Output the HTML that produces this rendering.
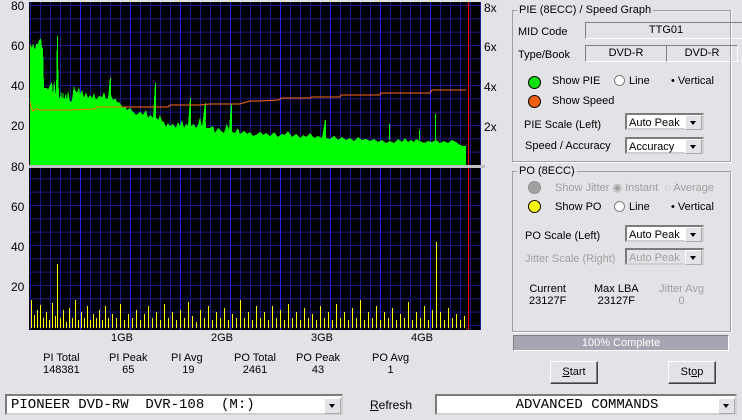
<!DOCTYPE html><html><head><style>
body{margin:0;width:742px;height:420px;background:#e3e2e6;font-family:"Liberation Sans",sans-serif;font-size:11px;color:#000;position:relative;overflow:hidden}
.a{position:absolute;white-space:nowrap}
.ax{font-size:12px}
.gb{position:absolute;border:1px solid #a0a0a0;box-shadow:1px 1px 0 #fff}
.gbt{position:absolute;top:-7px;left:4px;background:#e3e2e6;padding:0 2px}
.fld{position:absolute;border:1px solid;border-color:#808080 #fff #fff #808080;text-align:center;line-height:14px}
.cb{position:absolute;background:#fff;border:2px inset #d0d0d0;height:17px;line-height:17px;padding-left:2px;box-sizing:border-box}
.cb i{position:absolute;right:0;top:0;width:15px;height:13px;background:#e3e2e6;border:1px outset #fff}
.cb i:after{content:"";position:absolute;left:4px;top:5px;border:3.5px solid transparent;border-top:4px solid #000}
.dis{color:#a0a0a0}
.btn{position:absolute;border:1px solid;border-color:#fff #404040 #404040 #fff;box-shadow:inset -1px -1px 0 #808080;text-align:center;background:#e3e2e6}
.led{position:absolute;width:11px;height:11px;border-radius:50%;border:1px solid #000}
.rad{position:absolute;width:9px;height:9px;border-radius:50%;background:#fff;border:1px solid #808080}
</style></head><body>
<svg class="a" style="left:29px;top:2px" width="456" height="330" viewBox="29 2 456 330" shape-rendering="crispEdges">
<defs><pattern id="g" x="30" y="5" width="10" height="13.33" patternUnits="userSpaceOnUse"><path d="M0.5 0V13.33M0 0.5H10" stroke="#1a1a8c" stroke-width="1" fill="none"/></pattern></defs>
<rect x="29" y="2" width="452" height="163" fill="#000"/>
<rect x="29" y="168" width="452" height="162" fill="#000"/>
<rect x="29" y="2" width="452" height="163" fill="url(#g)"/>
<rect x="29" y="168" width="452" height="162" fill="url(#g)"/>
<g stroke="#2020ff" stroke-width="1"><path d="M80.5 2V165M130.5 2V165M180.5 2V165M230.5 2V165M280.5 2V165M330.5 2V165M380.5 2V165M430.5 2V165M80.5 168V330M130.5 168V330M180.5 168V330M230.5 168V330M280.5 168V330M330.5 168V330M380.5 168V330M430.5 168V330"/></g>
<polygon fill="#00ff00" points="30,165 30,44 32,48 33,43 35,50 36,44 38,44 39,40 41,38 42,48 43,47 44,88 47,88 48,90 50,85 52,82 53,95 54,80 56,95 57,36 58,60 59,98 60,98 61,90 62,100 63,91 64,100 66,93 67,100 68,90 70,102 72,100 74,85 75,90 77,93 79,87 80,94 82,90 84,98 86,92 88,98 90,95 92,98 94,93 96,100 98,97 100,96 102,98 104,92 106,99 108,98 110,78 111,95 113,100 115,98 117,102 120,103 123,108 125,106 127,110 130,108 133,112 136,115 140,112 143,115 146,110 148,118 150,115 153,118 155,83 156,118 158,120 160,115 162,121 164,122 166,127 168,123 170,126 173,124 176,128 178,122 180,126 182,120 184,128 186,124 188,126 190,98 191,126 194,124 196,128 198,125 200,117 202,127 205,103 206,128 210,128 213,126 215,133 218,128 220,130 224,133 227,124 229,130 231,104 232,132 235,133 238,128 240,134 244,131 247,134 250,132 253,136 256,135 260,132 263,135 266,133 270,136 274,132 278,137 282,134 285,135 288,131 292,137 296,134 300,138 303,135 306,137 310,133 314,138 318,136 322,138 325,120 326,138 330,139 334,136 338,140 342,137 346,140 350,138 354,141 358,137 362,140 366,139 370,141 374,139 378,142 382,140 386,143 388,142 390,141 394,143 398,139 402,142 405,138 408,142 411,140 414,142 416,139 420,141 424,143 428,141 432,142 436,140 440,143 444,141 448,143 452,140 456,142 460,145 463,146 466,146 466,165"/>
<g stroke="#00ff00" stroke-width="1"><path d="M57.5 36V60M110.5 78V95M155.5 83V118M190.5 98V120M205.5 103V120M231.5 104V130M325.5 120V138M389.5 124V140M435.5 114V140M419.5 130V140"/></g>
<polyline fill="none" stroke="#ff6a10" stroke-width="1" shape-rendering="auto" points="30,102 31,107 33,111 36,109 38,109 39,110 70,110 95,109 97,107 140,107 168,107 170,105 200,105 210,104 240,104 250,101 260,101 278,100 282,98 310,98 312,97 340,97 341,95 380,95 381,93 430,93 432,90 466,90"/>
<g stroke="#ffff00" stroke-width="1"><path d="M31.5 328V300M34.5 328V315M37.5 328V310M40.5 328V305M43.5 328V318M46.5 328V312M49.5 328V320M52.5 328V303M55.5 328V316M57.5 328V264M60.5 328V318M63.5 328V310M66.5 328V322M69.5 328V308M72.5 328V318M75.5 328V300M78.5 328V320M81.5 328V312M84.5 328V318M87.5 328V306M90.5 328V320M93.5 328V314M96.5 328V318M99.5 328V310M102.5 328V320M105.5 328V306M108.5 328V318M112.5 328V314M116.5 328V318M120.5 328V304M124.5 328V320M128.5 328V314M132.5 328V318M136.5 328V310M140.5 328V320M144.5 328V314M148.5 328V306M152.5 328V318M156.5 328V312M160.5 328V320M164.5 328V304M168.5 328V318M172.5 328V312M176.5 328V320M180.5 328V310M184.5 328V318M188.5 328V302M192.5 328V316M196.5 328V322M200.5 328V310M204.5 328V318M208.5 328V306M212.5 328V320M216.5 328V312M220.5 328V318M224.5 328V308M228.5 328V320M232.5 328V314M236.5 328V318M240.5 328V300M244.5 328V318M248.5 328V312M252.5 328V320M256.5 328V306M260.5 328V318M264.5 328V312M268.5 328V320M272.5 328V306M276.5 328V318M280.5 328V310M284.5 328V320M288.5 328V304M292.5 328V318M296.5 328V312M300.5 328V320M304.5 328V308M308.5 328V318M312.5 328V314M316.5 328V320M320.5 328V306M324.5 328V318M328.5 328V312M332.5 328V320M336.5 328V304M340.5 328V318M344.5 328V312M348.5 328V320M352.5 328V308M356.5 328V318M360.5 328V300M364.5 328V320M368.5 328V312M372.5 328V318M376.5 328V306M380.5 328V320M384.5 328V312M388.5 328V318M392.5 328V308M396.5 328V320M400.5 328V314M404.5 328V318M408.5 328V302M412.5 328V320M416.5 328V312M420.5 328V318M424.5 328V306M428.5 328V320M432.5 328V310M436.5 328V242M440.5 328V312M444.5 328V320M448.5 328V308M452.5 328V318M456.5 328V314M460.5 328V320M464.5 328V316"/></g>
<path d="M468.5 2V165M468.5 168V330" stroke="#ff0000" stroke-width="1"/>
<rect x="29" y="165" width="456" height="3" fill="#c0c0c0"/>
</svg>
<div class="a ax" style="left:11px;top:-1px">80</div><div class="a ax" style="left:11px;top:39px">60</div><div class="a ax" style="left:11px;top:79px">40</div><div class="a ax" style="left:11px;top:119px">20</div>
<div class="a ax" style="left:11px;top:160px">80</div><div class="a ax" style="left:11px;top:200px">60</div><div class="a ax" style="left:11px;top:240px">40</div><div class="a ax" style="left:11px;top:280px">20</div>
<div class="a ax" style="left:484px;top:1px">8x</div><div class="a ax" style="left:484px;top:40px">6x</div><div class="a ax" style="left:484px;top:80px">4x</div><div class="a ax" style="left:484px;top:120px">2x</div>
<div class="a" style="left:111px;top:332px">1GB</div><div class="a" style="left:211px;top:332px">2GB</div><div class="a" style="left:311px;top:332px">3GB</div><div class="a" style="left:411px;top:332px">4GB</div>
<div class="a" style="left:43px;top:352px;text-align:center">PI Total<br>148381</div>
<div class="a" style="left:109px;top:352px;text-align:center">PI Peak<br>65</div>
<div class="a" style="left:171px;top:352px;text-align:center">PI Avg<br>&nbsp;19</div>
<div class="a" style="left:234px;top:352px;text-align:center">PO Total<br>2461</div>
<div class="a" style="left:296px;top:352px;text-align:center">PO Peak<br>43</div>
<div class="a" style="left:372px;top:352px;text-align:center">PO Avg<br>1</div>

<div class="gb" style="left:512px;top:10px;width:217px;height:150px"><span class="gbt">PIE (8ECC) / Speed Graph</span></div>
<div class="a" style="left:518px;top:26px">MID Code</div>
<div class="fld" style="left:585px;top:22px;width:160px;height:15px">TTG01</div>
<div class="a" style="left:518px;top:49px">Type/Book</div>
<div class="fld" style="left:585px;top:45px;width:80px;height:15px">DVD-R</div>
<div class="fld" style="left:666px;top:45px;width:70px;height:15px">DVD-R</div>
<div class="led" style="left:528px;top:76px;background:#10e010"></div>
<div class="a" style="left:552px;top:75px">Show PIE</div>
<div class="rad" style="left:614px;top:75px"></div><div class="a" style="left:629px;top:75px">Line</div>
<div class="a" style="left:671px;top:75px">• Vertical</div>
<div class="led" style="left:528px;top:95px;background:#f06010"></div>
<div class="a" style="left:552px;top:95px">Show Speed</div>
<div class="a" style="left:524px;top:119px">PIE Scale (Left)</div>
<div class="cb" style="left:625px;top:113px;width:79px">Auto Peak<i></i></div>
<div class="a" style="left:525px;top:140px">Speed / Accuracy</div>
<div class="cb" style="left:625px;top:137px;width:79px">Accuracy<i></i></div>

<div class="gb" style="left:512px;top:171px;width:217px;height:159px"><span class="gbt">PO (8ECC)</span></div>
<div class="led" style="left:528px;top:181px;background:#a0a0a0;border-color:#909090"></div>
<div class="a dis" style="left:555px;top:181px">Show Jitter ◉ Instant &nbsp;◌ Average</div>
<div class="led" style="left:528px;top:200px;background:#ffff00"></div>
<div class="a" style="left:555px;top:201px">Show PO</div>
<div class="rad" style="left:614px;top:201px"></div><div class="a" style="left:629px;top:201px">Line</div>
<div class="a" style="left:671px;top:201px">• Vertical</div>
<div class="a" style="left:525px;top:230px">PO Scale (Left)</div>
<div class="cb" style="left:625px;top:225px;width:79px">Auto Peak<i></i></div>
<div class="a dis" style="left:525px;top:253px">Jitter Scale (Right)</div>
<div class="cb dis" style="left:625px;top:248px;width:79px;background:#e3e2e6">Auto Peak<i></i></div>
<div class="a" style="left:529px;top:283px;text-align:center">Current<br>23127F</div>
<div class="a" style="left:594px;top:283px;text-align:center">Max LBA<br>23127F</div>
<div class="a dis" style="left:659px;top:283px;text-align:center">Jitter Avg<br>0</div>
<div class="a" style="left:513px;top:335px;width:214px;height:14px;background:#a6a6b2;color:#fff;text-align:center;line-height:14px;border:1px solid #fff;border-color:#808080 #fff #fff #808080">100% Complete</div>
<div class="btn" style="left:550px;top:361px;width:46px;height:21px;line-height:21px"><u>S</u>tart</div>
<div class="btn" style="left:668px;top:361px;width:46px;height:21px;line-height:21px">St<u>o</u>p</div>
<div class="cb" style="left:5px;top:394px;width:338px;height:21px;line-height:18px;font-family:'Liberation Mono',monospace;font-size:14px;padding-left:4px">PIONEER DVD-RW&nbsp; DVR-108&nbsp; (M:)<i style="top:2px;height:14px"></i></div>
<div class="a" style="left:370px;top:398px;font-size:12px"><u>R</u>efresh</div>
<div class="cb" style="left:435px;top:394px;width:302px;height:21px;line-height:18px;font-family:'Liberation Mono',monospace;font-size:14px;text-align:center">ADVANCED COMMANDS<i style="top:2px;height:14px"></i></div>
</body></html>
